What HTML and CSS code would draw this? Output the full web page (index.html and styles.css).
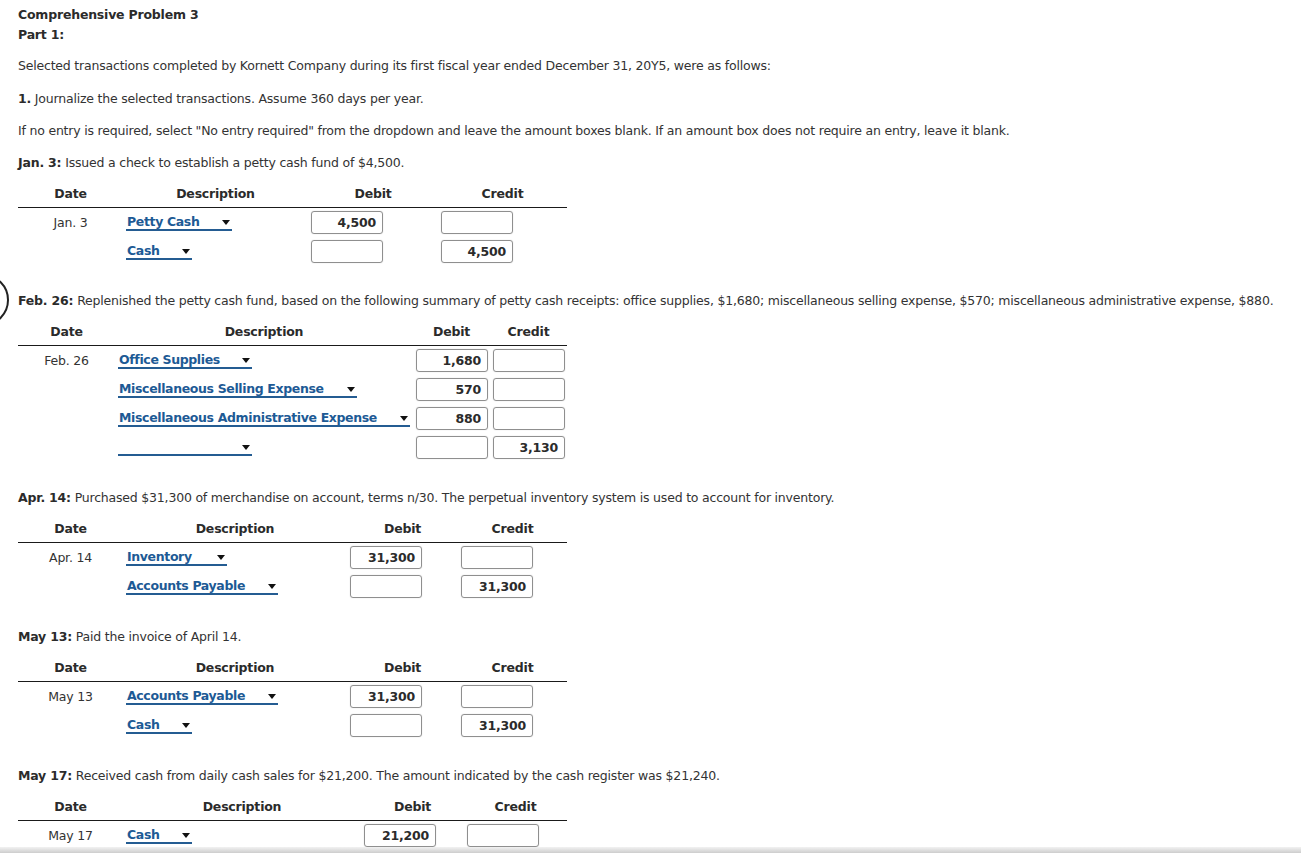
FILE: index.html
```html
<!DOCTYPE html>
<html>
<head>
<meta charset="utf-8">
<link rel="stylesheet" href="styles.css">
</head>
<body>
<div class="ring"></div>
<main class="page">
  <h1 class="title">Comprehensive Problem 3</h1>
  <h2 class="part">Part 1:</h2>
  <p class="p p-first">Selected transactions completed by Kornett Company during its first fiscal year ended December 31, 20Y5, were as follows:</p>
  <p class="p p-second"><b>1.</b> Journalize the selected transactions. Assume 360 days per year.</p>
  <p class="p">If no entry is required, select "No entry required" from the dropdown and leave the amount boxes blank. If an amount box does not require an entry, leave it blank.</p>

  <p class="p q"><b>Jan. 3:</b> Issued a check to establish a petty cash fund of $4,500.</p>
  <div class="journal j1">
    <div class="h">Date</div><div class="h">Description</div><div class="h">Debit</div><div class="h">Credit</div>
    <div class="c date">Jan. 3</div>
    <div class="c desc"><span class="dd w-petty">Petty Cash<i class="arr"></i></span></div>
    <div class="c"><span class="amt">4,500</span></div>
    <div class="c"><span class="amt"></span></div>
    <div class="c date"></div>
    <div class="c desc"><span class="dd w-cash">Cash<i class="arr"></i></span></div>
    <div class="c"><span class="amt"></span></div>
    <div class="c"><span class="amt">4,500</span></div>
  </div>

  <p class="p q"><b>Feb. 26:</b> Replenished the petty cash fund, based on the following summary of petty cash receipts: office supplies, $1,680; miscellaneous selling expense, $570; miscellaneous administrative expense, $880.</p>
  <div class="journal j2">
    <div class="h">Date</div><div class="h">Description</div><div class="h">Debit</div><div class="h">Credit</div>
    <div class="c date">Feb. 26</div>
    <div class="c desc"><span class="dd w-office">Office Supplies<i class="arr"></i></span></div>
    <div class="c"><span class="amt">1,680</span></div>
    <div class="c"><span class="amt"></span></div>
    <div class="c date"></div>
    <div class="c desc"><span class="dd w-sell">Miscellaneous Selling Expense<i class="arr"></i></span></div>
    <div class="c"><span class="amt">570</span></div>
    <div class="c"><span class="amt"></span></div>
    <div class="c date"></div>
    <div class="c desc"><span class="dd w-admin">Miscellaneous Administrative Expense<i class="arr"></i></span></div>
    <div class="c"><span class="amt">880</span></div>
    <div class="c"><span class="amt"></span></div>
    <div class="c date"></div>
    <div class="c desc"><span class="dd w-office"><i class="arr"></i></span></div>
    <div class="c"><span class="amt"></span></div>
    <div class="c"><span class="amt">3,130</span></div>
  </div>

  <p class="p q"><b>Apr. 14:</b> Purchased $31,300 of merchandise on account, terms n/30. The perpetual inventory system is used to account for inventory.</p>
  <div class="journal j3">
    <div class="h">Date</div><div class="h">Description</div><div class="h">Debit</div><div class="h">Credit</div>
    <div class="c date">Apr. 14</div>
    <div class="c desc"><span class="dd w-inv">Inventory<i class="arr"></i></span></div>
    <div class="c"><span class="amt">31,300</span></div>
    <div class="c"><span class="amt"></span></div>
    <div class="c date"></div>
    <div class="c desc"><span class="dd w-ap">Accounts Payable<i class="arr"></i></span></div>
    <div class="c"><span class="amt"></span></div>
    <div class="c"><span class="amt">31,300</span></div>
  </div>

  <p class="p q"><b>May 13:</b> Paid the invoice of April 14.</p>
  <div class="journal j3">
    <div class="h">Date</div><div class="h">Description</div><div class="h">Debit</div><div class="h">Credit</div>
    <div class="c date">May 13</div>
    <div class="c desc"><span class="dd w-ap">Accounts Payable<i class="arr"></i></span></div>
    <div class="c"><span class="amt">31,300</span></div>
    <div class="c"><span class="amt"></span></div>
    <div class="c date"></div>
    <div class="c desc"><span class="dd w-cash">Cash<i class="arr"></i></span></div>
    <div class="c"><span class="amt"></span></div>
    <div class="c"><span class="amt">31,300</span></div>
  </div>

  <p class="p q"><b>May 17:</b> Received cash from daily cash sales for $21,200. The amount indicated by the cash register was $21,240.</p>
  <div class="journal j5">
    <div class="h">Date</div><div class="h">Description</div><div class="h">Debit</div><div class="h">Credit</div>
    <div class="c date">May 17</div>
    <div class="c desc"><span class="dd w-cash">Cash<i class="arr"></i></span></div>
    <div class="c"><span class="amt">21,200</span></div>
    <div class="c"><span class="amt"></span></div>
  </div>
</main>
<div class="shade"></div>
</body>
</html>
```
FILE: styles.css
```css
html, body {
  margin: 0;
  padding: 0;
  background: #fff;
}
body {
  font-family: "DejaVu Sans", Verdana, sans-serif;
  font-size: 12.5px;
  letter-spacing: -0.2px;
  color: #333;
  overflow: hidden;
}
.page {
  padding: 5px 0 0 18px;
}
.title, .part {
  margin: 0;
  font-size: 12.5px;
  line-height: 20px;
  font-weight: bold;
  color: #2b2b2b;
}
.p {
  margin: 0 0 16px 0;
  line-height: 16px;
  white-space: nowrap;
}
.p-first {
  margin-top: 13px;
  margin-bottom: 17px;
}
.p b {
  color: #2b2b2b;
}
.q {
  margin-bottom: 15px;
}
.journal {
  display: grid;
  width: 549px;
  margin-bottom: 28px;
}
.j1 {
  grid-template-columns: 105px 185px 130px 129px;
  margin-bottom: 27px;
}
.j2 { grid-template-columns: 97px 298px 77px 77px; }
.j3 { grid-template-columns: 105px 224px 111px 109px; }
.j5 { grid-template-columns: 105px 238px 103px 103px; }
.h {
  font-weight: bold;
  color: #2b2b2b;
  text-align: center;
  line-height: 16px;
  padding-bottom: 5px;
  border-bottom: 1px solid #1a1a1a;
}
.c {
  height: 29px;
  display: flex;
  align-items: center;
  padding-left: 3px;
}
.date {
  justify-content: center;
  padding-left: 0;
}
.dd {
  position: relative;
  display: inline-block;
  box-sizing: border-box;
  height: 17px;
  line-height: 15px;
  font-weight: bold;
  letter-spacing: -0.36px;
  color: #1d5a95;
  border-bottom: 2px solid #245c92;
  padding-left: 1px;
  white-space: nowrap;
}
.arr {
  position: absolute;
  right: 2px;
  top: 6px;
  width: 0;
  height: 0;
  border-left: 4px solid transparent;
  border-right: 4px solid transparent;
  border-top: 5px solid #111;
}
.w-petty { width: 106px; }
.w-cash { width: 66px; }
.w-office { width: 134px; }
.w-sell { width: 239px; }
.w-admin { width: 292px; }
.w-inv { width: 101px; }
.w-ap { width: 152px; }
.amt {
  box-sizing: border-box;
  display: block;
  width: 72px;
  height: 23px;
  border: 1px solid #8f8f8f;
  border-radius: 3px;
  box-shadow: 0 0 1px rgba(0,0,0,0.25);
  text-align: right;
  padding-right: 6px;
  line-height: 21px;
  font-weight: bold;
  color: #2b2b2b;
}
.ring {
  position: absolute;
  left: -43px;
  top: 274px;
  width: 48px;
  height: 48px;
  border: 2px solid #222;
  border-radius: 50%;
}
.shade {
  position: fixed;
  left: 0;
  right: 0;
  bottom: 0;
  height: 6px;
  background: linear-gradient(to bottom, #f2f2f2, #cdcdcd);
}
```
